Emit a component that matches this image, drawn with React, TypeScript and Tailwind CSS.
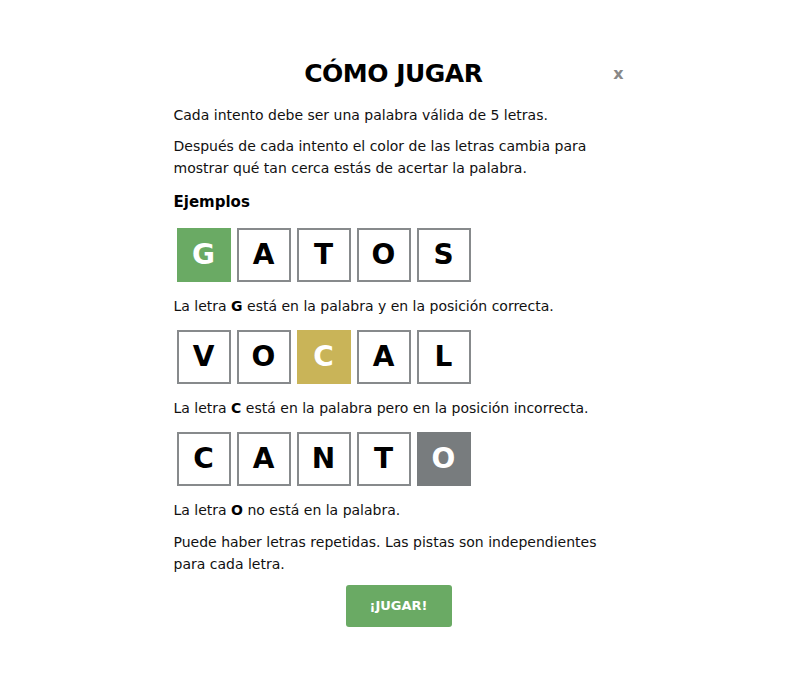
const rows: { letters: string[]; mark: number; color: string; hint: string; rest: string }[] = [
  { letters: ['G', 'A', 'T', 'O', 'S'], mark: 0, color: 'bg-[#6aaa64]', hint: 'G', rest: 'está en la palabra y en la posición correcta.' },
  { letters: ['V', 'O', 'C', 'A', 'L'], mark: 2, color: 'bg-[#c9b458]', hint: 'C', rest: 'está en la palabra pero en la posición incorrecta.' },
  { letters: ['C', 'A', 'N', 'T', 'O'], mark: 4, color: 'bg-[#787c7e]', hint: 'O', rest: 'no está en la palabra.' },
]

function Tile({ letter, filled, color }: { letter: string; filled: boolean; color: string }) {
  return (
    <div
      className={`flex h-[54px] w-[54px] items-center justify-center text-[28px] font-bold ${
        filled ? `${color} text-white` : 'border-2 border-[#878a8c] bg-white text-black'
      }`}
    >
      {letter}
    </div>
  )
}

export default function App() {
  return (
    <div className="min-h-[700px] bg-white font-['DejaVu_Sans',sans-serif] text-[#111]">
      <div className="mx-auto w-[450px] pt-[56px]">
        {/* Header */}
        <div className="flex items-center">
          <h1 className="flex-1 text-center text-[25px] font-bold leading-[36px] tracking-[-0.02em] text-black">CÓMO JUGAR</h1>
          <button type="button" className="text-[16px] font-bold text-[#888] leading-none">
            x
          </button>
        </div>

        <p className="mt-[12px] text-[14px] leading-[22px]">Cada intento debe ser una palabra válida de 5 letras.</p>
        <p className="mt-[9px] text-[14px] leading-[22px]">
          Después de cada intento el color de las letras cambia para mostrar qué tan cerca estás de acertar la palabra.
        </p>

        <h3 className="mt-[12px] text-[15px] font-bold leading-[22px] text-black">Ejemplos</h3>

        {rows.map((row, r) => (
          <div key={row.hint + row.rest}>
            <div className={`${r === 0 ? 'mt-[15px]' : 'mt-[13px]'} ml-[3px] flex gap-[6px]`}>
              {row.letters.map((l, i) => (
                <Tile key={i} letter={l} filled={i === row.mark} color={row.color} />
              ))}
            </div>
            <p className="mt-[13px] text-[14px] leading-[22px]">
              La letra <b className="text-black">{row.hint}</b> {row.rest}
            </p>
          </div>
        ))}

        <p className="mt-[10px] text-[14px] leading-[22px]">
          Puede haber letras repetidas. Las pistas son independientes para cada letra.
        </p>

        <div className="mt-[10px] flex justify-center">
          <button
            type="button"
            className="h-[42px] w-[106px] rounded-[3px] bg-[#6aaa64] text-[13px] font-bold text-white"
          >
            ¡JUGAR!
          </button>
        </div>
      </div>
    </div>
  )
}
